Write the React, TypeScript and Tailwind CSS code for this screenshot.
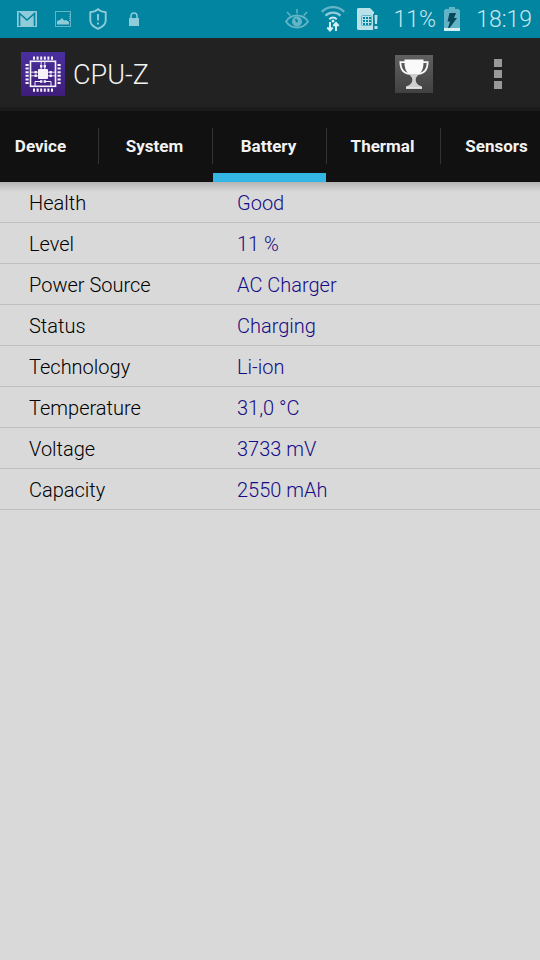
import { useState } from "react"

const tabs = ["Device", "System", "Battery", "Thermal", "Sensors"]

const batteryInfo = [
  { label: "Health", value: "Good" },
  { label: "Level", value: "11 %" },
  { label: "Power Source", value: "AC Charger" },
  { label: "Status", value: "Charging" },
  { label: "Technology", value: "Li-ion" },
  { label: "Temperature", value: "31,0 °C" },
  { label: "Voltage", value: "3733 mV" },
  { label: "Capacity", value: "2550 mAh" },
]

const pins = [13, 16.6, 20.2, 23.8, 27.4, 31]

const MailIcon = () => (
  <svg width="20" height="16" viewBox="0 0 20 16">
    <rect width="20" height="16" fill="#8fcbd8" />
    <path d="M2.500 15V2.500L10 9l7.500-6.500V15" fill="none" stroke="#0285a1" strokeWidth="1.600" />
  </svg>
)

const PictureIcon = () => (
  <svg width="16" height="16" viewBox="0 0 16 16">
    <rect x="0.500" y="0.500" width="15" height="15" fill="#0285a1" stroke="#62b4c6" />
    <path d="M2 13.500V10l3-1 2-2 2 2.500 2-.5 3 2v2.500z" fill="#8fcbd8" />
    <path d="M14.500 3v8" stroke="#62b4c6" strokeDasharray="1 1" />
  </svg>
)

const ShieldIcon = () => (
  <svg width="18" height="22" viewBox="0 0 18 22" fill="none" stroke="#8fcbd8" strokeWidth="1.900">
    <path d="M9 1.200C7 3 4.500 4 1.300 4.300v8.200c0 3.800 3.500 6.500 7.700 8.300 4.200-1.800 7.700-4.500 7.700-8.300V4.300C13.500 4 11 3 9 1.200z" />
    <path d="M9 6v6.500M9 14.500v2" />
  </svg>
)

const LockIcon = () => (
  <svg width="10" height="14" viewBox="0 0 10 14">
    <path d="M2 7V4a3 3 0 0 1 6 0v3" fill="none" stroke="#8fcbd8" strokeWidth="1.500" />
    <rect y="6" width="10" height="8" fill="#8fcbd8" />
  </svg>
)

const EyeIcon = () => (
  <svg width="24" height="20" viewBox="0 0 24 20" fill="none" stroke="#62b4c6">
    <path d="M1 12.500C3.500 8.500 7.500 6.500 12 6.500s8.500 2 11 6c-2.500 3.800-6.500 6-11 6s-8.500-2.200-11-6z" strokeWidth="1.900" />
    <path d="M12 0v4.500M2 3l3.300 3.500M22 3l-3.300 3.500" strokeWidth="1.500" />
    <circle cx="12" cy="12.500" r="5" fill="#62b4c6" stroke="none" />
    <path d="M10.500 10l2 3" stroke="#0285a1" strokeWidth="2" />
  </svg>
)

const WifiIcon = () => (
  <svg width="24" height="26" viewBox="0 0 24 26" fill="none">
    <path d="M.8 5.800C7-.4 17-.4 23.200 5.800" stroke="#62b4c6" strokeWidth="2.400" />
    <path d="M4.500 9.600c4.200-4 10.800-4 15 0" stroke="#8fcbd8" strokeWidth="2.200" />
    <path d="M8.300 13.200c2.200-2 5.200-2 7.400 0" stroke="#d3f0f5" strokeWidth="2" />
    <circle cx="12" cy="15" r="1.500" fill="#d3f0f5" />
    <path d="M9 16v8M6.300 21.500L9 24.500l2.700-3M15 25v-7M12.300 20L15 17l2.700 3" stroke="#d3f0f5" strokeWidth="2" />
  </svg>
)

const SimIcon = () => (
  <svg width="21" height="24" viewBox="0 0 21 24">
    <path d="M0 2l1-1h12l4 4v18H1l-1-1z" fill="#b9e1e9" />
    <rect x="4.500" y="8.500" width="10" height="10" rx="1" fill="none" stroke="#62b4c6" />
    <path d="M6 10h2v2H6zM9 10h2v2H9zM12 10h2v2h-2zM6 13h2v2H6zM9 13h2v2H9zM12 13h2v2h-2zM6 16h2v2H6zM9 16h2v2H9zM12 16h2v2h-2z" fill="#0285a1" />
    <path d="M16 7h5v17h-5z" fill="#0285a1" />
    <path d="M17.500 8h3l-.5 9h-2zM17.500 19h3v3h-3z" fill="#b9e1e9" />
  </svg>
)

const BatteryIcon = () => (
  <svg width="16" height="24" viewBox="0 0 16 24">
    <path d="M5 0h6v2h3.500L16 3.500V24H0V3.500L1.500 2H5z" fill="#62b4c6" />
    <path d="M0 21h16v3H0z" fill="#d3f0f5" />
    <path d="M5.500 6H12l-2 5h3L5.500 21H4l2-6.500H3.500z" fill="#07485a" />
  </svg>
)

const CpuIcon = () => (
  <svg width="44" height="44" viewBox="0 0 44 44">
    <defs>
      <linearGradient id="cpu" x1="0" y1="0" x2="0" y2="1">
        <stop offset="0" stopColor="#4a2fa0" />
        <stop offset="1" stopColor="#3e1c78" />
      </linearGradient>
    </defs>
    <rect width="44" height="44" fill="url(#cpu)" />
    <g fill="none" stroke="#f4f1fa">
      <rect x="9.500" y="9.300" width="25" height="25" strokeWidth="1.600" />
      {pins.map((pin) => (
        <path
          key={pin}
          d={`M${pin} 4.500v3.200M${pin} 36.500v3.200M4.500 ${pin}h3.200M36.500 ${pin}h3.200`}
          strokeWidth="2"
        />
      ))}
      <path d="M20.200 10v7M23.800 10v7M10 20.200h7M10 23.800h7M27 20.200h7M27 23.800h7" strokeWidth=".9" />
      <path d="M14 34v-4.500h6M30 34v-4.500h-6" strokeWidth="1" />
    </g>
    <g fill="#f4f1fa">
      <rect x="17" y="17" width="10" height="10" rx="1" />
      <path d="M19 13h2.400v2.400H19zM22.600 13H25v2.400h-2.400zM13.500 19h2.400v2.400h-2.400zM13.500 22.600h2.400V25h-2.400zM28.500 19h2.400v2.400h-2.400zM28.500 22.600h2.400V25h-2.400zM19 28.300h2.400v2.400H19zM22.600 28.300H25v2.400h-2.400z" />
    </g>
  </svg>
)

const TrophyIcon = () => (
  <svg width="38" height="38" viewBox="0 0 38 38">
    <defs>
      <linearGradient id="tile" x1="0" y1="0" x2="0" y2="1">
        <stop offset="0" stopColor="#606060" />
        <stop offset="1" stopColor="#414141" />
      </linearGradient>
    </defs>
    <rect width="38" height="38" fill="url(#tile)" />
    <path
      d="M11 7.200H5.300C5.500 13 7.500 18.500 15 19M27 7.200h5.700C32.500 13 30.500 18.500 23 19"
      fill="none"
      stroke="#f8f8f8"
      strokeWidth="1.700"
    />
    <path d="M9.500 4.500h19v2c0 6-1 10-5 13h-9c-4-3-5-7-5-13z" fill="#fafafa" />
    <path d="M14 19h10c-1 2-3.300 3-3.300 5.500S22 30 27 31.500v2.300H11v-2.300c5-1.500 6.300-4.500 6.300-7S15 21 14 19z" fill="#cfcfcf" />
    <path d="M11 32h16v1.800H11z" fill="#e3e3e3" />
  </svg>
)

const StatusBar = () => (
  <div className="flex h-[38px] items-center justify-between bg-[#0285a1] pr-2 pl-[17px] text-[23px] font-light text-[#c5e7ee]">
    <div className="flex items-center gap-[18px]">
      <MailIcon />
      <PictureIcon />
      <ShieldIcon />
      <div className="pl-1">
        <LockIcon />
      </div>
    </div>
    <div className="flex items-center">
      <div className="flex items-center gap-3 pr-4">
        <EyeIcon />
        <WifiIcon />
        <SimIcon />
      </div>
      <span className="pt-0.5 pr-2">11%</span>
      <BatteryIcon />
      <span className="pt-0.5 pl-4">18:19</span>
    </div>
  </div>
)

const ActionBar = () => (
  <header className="flex h-[73px] items-center justify-between border-b-4 border-[#1b1b1b] bg-[#222222] pt-0.5 pr-[38px] pl-[21px]">
    <div className="flex items-center gap-2">
      <CpuIcon />
      <h1 className="pt-1 text-[27px] font-light text-[#f3f3f3]">CPU-Z</h1>
    </div>
    <div className="flex items-center gap-[61px]">
      <button aria-label="Rate">
        <TrophyIcon />
      </button>
      <button aria-label="More options" className="flex flex-col gap-[3px]">
        <span className="size-2 bg-[#999999]" />
        <span className="size-2 bg-[#999999]" />
        <span className="size-2 bg-[#999999]" />
      </button>
    </div>
  </header>
)

const App = () => {
  const [activeTab, setActiveTab] = useState("Battery")

  return (
    <div className="min-h-screen overflow-hidden bg-[#d9d9d9] font-[Roboto,sans-serif]">
      <StatusBar />
      <ActionBar />
      <nav className="flex h-[71px] justify-center overflow-hidden bg-[#111111]" role="tablist">
        {tabs.map((tab) => (
          <button
            key={tab}
            role="tab"
            aria-selected={activeTab === tab}
            onClick={() => setActiveTab(tab)}
            className="flex w-[114px] shrink-0 flex-col text-[17px] font-bold text-[#f3f3f3]"
          >
            <span className="mt-[17px] flex h-9 w-full items-center justify-center border-r border-[#333333] pt-0.5 pr-0.5">
              {tab}
            </span>
            <span className={activeTab === tab ? "mt-auto h-[9px] w-[113px] bg-[#33b5e5]" : "hidden"} />
          </button>
        ))}
      </nav>
      <main className="bg-linear-to-b from-[#b4b4b4] to-[#d9d9d9] to-[10px]">
        <table className="w-full table-fixed text-left text-[20px] leading-[38px] font-light">
          <tbody>
            {batteryInfo.map((info) => (
              <tr key={info.label} className="border-b border-[#bfbfbf]">
                <th scope="row" className="w-[237px] p-0 pt-0.5 pl-[29px] font-light text-black">
                  {info.label}
                </th>
                <td className="p-0 pt-0.5 text-[#150c85]">{info.value}</td>
              </tr>
            ))}
          </tbody>
        </table>
      </main>
    </div>
  )
}

export default App
